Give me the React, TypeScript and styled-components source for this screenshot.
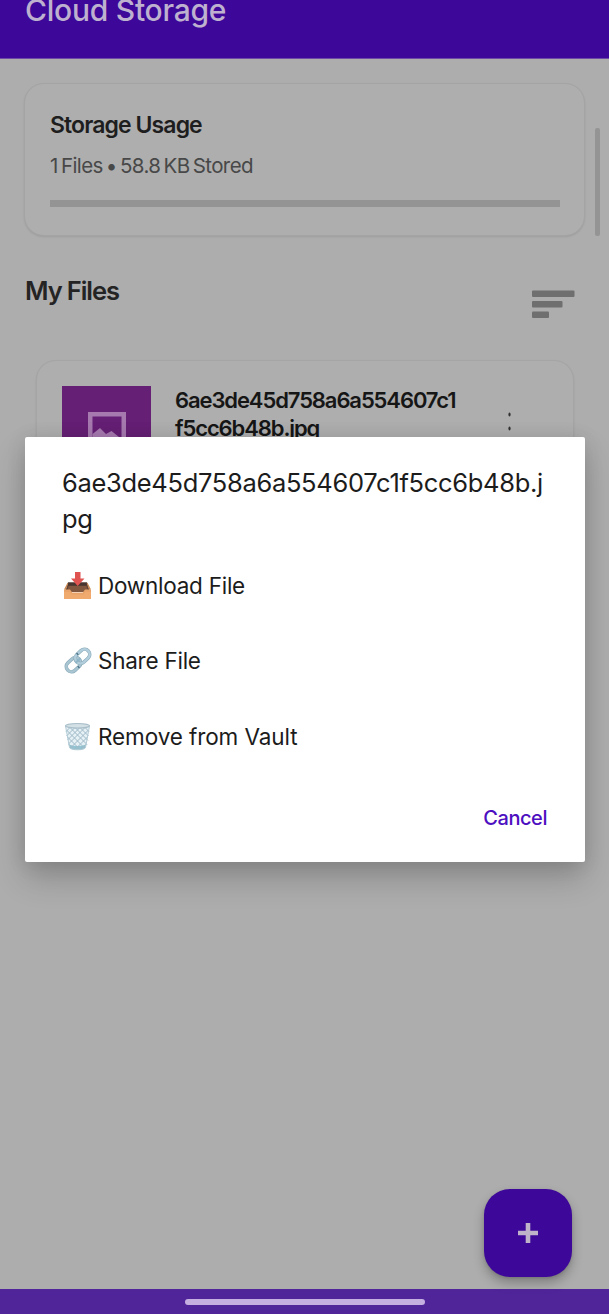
import React from "react";
import styled, { createGlobalStyle } from "styled-components";

const GlobalStyle = createGlobalStyle`
  * { box-sizing: border-box; }
  body { margin: 0; background: #adadad; }
`;

const Screen = styled.div`
  position: relative;
  display: flex;
  flex-direction: column;
  width: 609px;
  height: 1314px;
  overflow: hidden;
  background: #adadad;
  font-family: Inter, "Liberation Sans", sans-serif;
  white-space: nowrap;
`;

const Label = styled.div<{ $size: number; $line: number; $color: string; $weight?: number; $track?: number }>`
  font-size: ${(p) => p.$size}px;
  line-height: ${(p) => p.$line}px;
  color: ${(p) => p.$color};
  font-weight: ${(p) => p.$weight ?? 400};
  letter-spacing: ${(p) => p.$track ?? 0}px;
`;

const AppBar = styled.header`
  flex: none;
  display: flex;
  align-items: flex-end;
  height: 59px;
  padding: 0 25px 29px;
  background: #3d0799;
  border-bottom: 1px solid #6c4aa6;
`;

const Content = styled.main`
  flex: 1;
  min-height: 0;
  padding: 24px 24px 0;
`;

const UsageCard = styled.section`
  height: 153px;
  padding: 26px 25px 0;
  border: 1px solid #a4a4a4;
  border-radius: 20px;
  background: #aeaeae;
  box-shadow: 0 1px 2px rgba(0, 0, 0, 0.09);
`;

const UsageText = styled(Label)`
  margin-top: 12px;
  word-spacing: -2px;
`;

const Track = styled.div`
  width: 510px;
  height: 7px;
  margin-top: 20px;
  background: #949494;
`;

const SectionHead = styled.div`
  display: flex;
  justify-content: space-between;
  padding: 36px 10px 0 1px;
  height: 124px;
`;

const SortIcon = styled.svg`
  margin-top: 18px;
`;

const FileCard = styled.section`
  display: flex;
  height: 142px;
  margin: 0 11px 0 12px;
  padding: 25px 25px 0;
  border: 1px solid #a5a5a5;
  border-radius: 20px;
  background: #aeaeae;
  box-shadow: 0 1px 2px rgba(0, 0, 0, 0.09);
`;

const Thumb = styled.div`
  display: flex;
  align-items: center;
  justify-content: center;
  width: 89px;
  height: 89px;
  background: #651f74;
`;

const FileName = styled(Label)`
  margin-left: 24px;
  width: 300px;
`;

const MoreDots = styled.svg`
  margin: 26px 0 0 32px;
`;

const ScrollThumb = styled.div`
  position: absolute;
  top: 128px;
  left: 595px;
  width: 5px;
  height: 108px;
  border-radius: 2px;
  background: #949494;
`;

const Fab = styled.button`
  position: absolute;
  right: 37px;
  bottom: 37px;
  display: flex;
  align-items: center;
  justify-content: center;
  width: 88px;
  height: 88px;
  padding: 0;
  border: 0;
  border-radius: 26px;
  background: #3d0799;
  box-shadow: 0 6px 11px rgba(0, 0, 0, 0.26), 0 1px 3px rgba(0, 0, 0, 0.12);
`;

const NavBar = styled.footer`
  flex: none;
  display: flex;
  justify-content: center;
  height: 25px;
  padding-top: 10px;
  background: #50259a;
`;

const Handle = styled.div`
  width: 240px;
  height: 6px;
  border-radius: 3px;
  background: #c5afe1;
`;

const Dialog = styled.div`
  position: absolute;
  top: 437px;
  left: 25px;
  display: flex;
  flex-direction: column;
  width: 560px;
  height: 425px;
  padding: 28px 38px 0 37px;
  border-radius: 2px;
  background: #fff;
  box-shadow: 0 16px 32px rgba(0, 0, 0, 0.2), 0 2px 20px rgba(0, 0, 0, 0.1);
`;

const Options = styled.div`
  display: flex;
  flex-direction: column;
  margin-top: 11px;
`;

const Option = styled.div`
  display: flex;
  align-items: center;
  gap: 5px;
  height: 75.5px;
`;

const Actions = styled.div`
  display: flex;
  justify-content: flex-end;
  margin-top: 29.5px;
`;

const InboxIcon = () => (
  <svg width="31" height="32" viewBox="0 0 31 32">
    <path d="M6 12.500h19l3 9.500H3z" fill="#5d4237" />
    <path d="M6 12.500h19l.7 3H5.300z" fill="#49352f" />
    <path d="M6.500 16h18l2 6H5z" fill="#80563f" />
    <path d="M2 19.500h6l2.200 3h10.600l2.200-3h6V29H2z" fill="#e9a368" />
    <path d="M2 19.500 5.400 13l.9.500L4 19.500zM29 19.500 25.600 13l-.9.500 2.300 6z" fill="#c98752" />
    <path d="M2 22h5.500l2 2.500h12l2-2.500H29v7H2z" fill="#f0aa6e" />
    <path d="M13 2h5.500v6.500h4L15.700 16 9 8.500h4z" fill="#df5350" />
  </svg>
);

const LinkIcon = () => (
  <svg width="31" height="32" viewBox="0 0 31 32">
    <g transform="translate(16 15.500) rotate(-43) scale(.94)" fill="none">
      <rect x="-15" y="-5.500" width="17" height="11" rx="5.500" stroke="#88a9b8" strokeWidth="3.800" />
      <rect x="-15" y="-5.500" width="17" height="11" rx="5.500" stroke="#a9c5d2" strokeWidth="2.600" />
      <rect x="-2" y="-5.500" width="17" height="11" rx="5.500" stroke="#88a9b8" strokeWidth="3.800" />
      <rect x="-2" y="-5.500" width="17" height="11" rx="5.500" stroke="#b2cddb" strokeWidth="2.600" />
      <path d="M-5 5.500h1.500M3.500-5.500H5" stroke="#4b7185" strokeWidth="2.600" />
      <path d="M-3.500 0h7" stroke="#8fb5c8" strokeWidth="2" />
    </g>
  </svg>
);

const TrashIcon = () => (
  <svg width="31" height="32" viewBox="0 0 31 32">
    <path d="M3.500 4.500h24l-4 22c-.5 3-15.500 3-16 0z" fill="#e6f1f5" />
    <path d="M7 23.500q8.500 3 17 0l-.5 3c-.5 3-15.500 3-16 0z" fill="#93c3d1" />
    <path
      d="M4.500 9l18 18M8 6.500l17 17M13 6.500l13 13M18 6.500l8.500 8.500M23 6.500l4 4M5.500 16l13 13M6.500 23l6 6M26.500 9L8.500 27M23 6.500L6.500 23M18 6.500L5.500 19M13 6.500L4.500 15M8 6.500l-4 4M25.500 16L12.500 29M24.500 23l-6 6"
      stroke="#9fbac8"
      strokeWidth="1"
      fill="none"
    />
    <path d="M3.500 5l4 21.500c.5 3 15.500 3 16 0L27.500 5" fill="none" stroke="#b3ccd6" strokeWidth="1" />
    <ellipse cx="15.500" cy="4.800" rx="12" ry="2.300" fill="#d3e0e6" stroke="#a8bec9" strokeWidth="1.200" />
  </svg>
);

const options = [
  { text: "Download File", Icon: InboxIcon, track: -0.25 },
  { text: "Share File", Icon: LinkIcon, track: -0.25 },
  { text: "Remove from Vault", Icon: TrashIcon, track: -0.1 },
];

export default function App() {
  return (
    <>
      <GlobalStyle />
      <Screen>
        <AppBar>
          <Label $size={30} $line={38} $color="#bdb1cf" $weight={450} $track={-0.25}>Cloud Storage</Label>
        </AppBar>
        <Content>
          <UsageCard>
            <Label $size={23} $line={30} $color="#1e1e1e" $weight={600} $track={-0.9}>Storage Usage</Label>
            <UsageText $size={20.5} $line={28} $color="#484848" $track={-0.6}>1 Files • 58.8 KB Stored</UsageText>
            <Track />
          </UsageCard>
          <SectionHead>
            <Label $size={25.5} $line={38} $color="#242424" $weight={600} $track={-1.1}>My Files</Label>
            <SortIcon width="44" height="30" viewBox="0 0 44 30" fill="#6f6f6f">
              <rect x="1" y="0.5" width="42.5" height="6.5" rx="1" />
              <rect x="1" y="11" width="30.5" height="6.5" rx="1" />
              <rect x="1" y="21.5" width="17" height="6.5" rx="1" />
            </SortIcon>
          </SectionHead>
          <FileCard>
            <Thumb>
              <svg width="38" height="38" viewBox="0 0 38 38">
                <path fillRule="evenodd" d="M0 0h38v38H0zM4.500 4.500v29h29v-29z" fill="#a679af" />
                <path d="M4.500 22l7.500-6 6 6 5.500-3 10 8v6h-29z" fill="#a679af" />
              </svg>
            </Thumb>
            <FileName $size={22} $line={28} $color="#161616" $weight={600} $track={-1.1}>
              6ae3de45d758a6a554607c1
              <br />
              f5cc6b48b.jpg
            </FileName>
            <MoreDots width="4" height="34" viewBox="0 0 4 34" fill="#303030">
              <ellipse cx="2.5" cy="2.5" rx="1.1" ry="2" />
              <ellipse cx="2.5" cy="16.5" rx="1.1" ry="2" />
              <ellipse cx="2.5" cy="30.5" rx="1.1" ry="2" />
            </MoreDots>
          </FileCard>
        </Content>
        <NavBar>
          <Handle />
        </NavBar>
        <ScrollThumb />
        <Fab aria-label="Add file">
          <svg width="22" height="22" viewBox="0 0 22 22">
            <path d="M8.700 1h4.600v7.700H21v4.600h-7.700V21H8.700v-7.700H1V8.700h7.700z" fill="#bfb3ca" />
          </svg>
        </Fab>
        <Dialog role="dialog">
          <Label $size={25.5} $line={36} $color="#1c1c1c" $weight={430} $track={-0.32}>
            6ae3de45d758a6a554607c1f5cc6b48b.j
            <br />
            pg
          </Label>
          <Options>
            {options.map(({ text, Icon, track }) => (
              <Option key={text}>
                <Icon />
                <Label $size={22.5} $line={30} $color="#1c1c1c" $weight={430} $track={track}>{text}</Label>
              </Option>
            ))}
          </Options>
          <Actions>
            <Label $size={20} $line={28} $color="#4d0fc0" $weight={450} $track={-0.45}>Cancel</Label>
          </Actions>
        </Dialog>
      </Screen>
    </>
  );
}
